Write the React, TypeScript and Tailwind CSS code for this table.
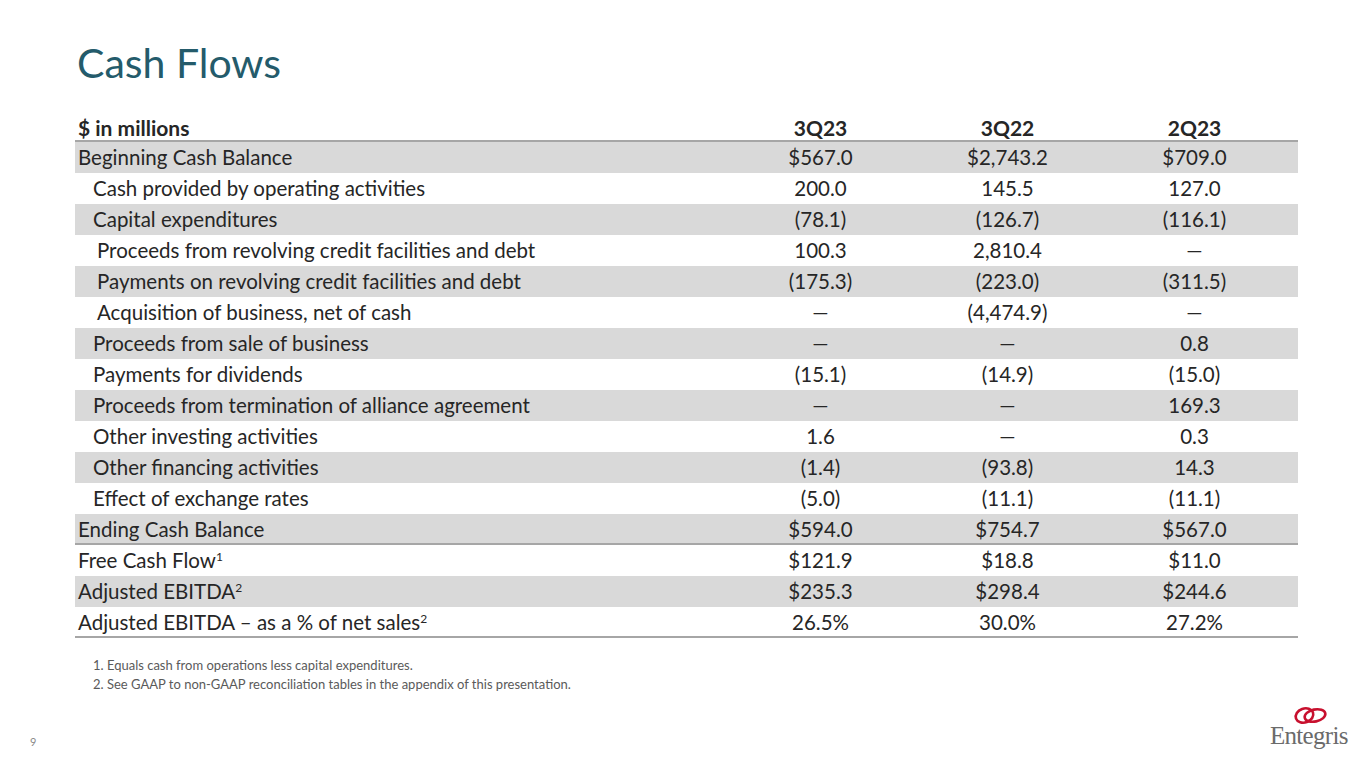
const rows: {
  label: string;
  sup?: string;
  indent?: number;
  shaded: boolean;
  values: string[];
  borderBottom?: boolean;
}[] = [
  { label: "Beginning Cash Balance", shaded: true, values: ["$567.0", "$2,743.2", "$709.0"] },
  { label: "Cash provided by operating activities", indent: 1, shaded: false, values: ["200.0", "145.5", "127.0"] },
  { label: "Capital expenditures", indent: 1, shaded: true, values: ["(78.1)", "(126.7)", "(116.1)"] },
  { label: "Proceeds from revolving credit facilities and debt", indent: 2, shaded: false, values: ["100.3", "2,810.4", "—"] },
  { label: "Payments on revolving credit facilities and debt", indent: 2, shaded: true, values: ["(175.3)", "(223.0)", "(311.5)"] },
  { label: "Acquisition of business, net of cash", indent: 2, shaded: false, values: ["—", "(4,474.9)", "—"] },
  { label: "Proceeds from sale of business", indent: 1, shaded: true, values: ["—", "—", "0.8"] },
  { label: "Payments for dividends", indent: 1, shaded: false, values: ["(15.1)", "(14.9)", "(15.0)"] },
  { label: "Proceeds from termination of alliance agreement", indent: 1, shaded: true, values: ["—", "—", "169.3"] },
  { label: "Other investing activities", indent: 1, shaded: false, values: ["1.6", "—", "0.3"] },
  { label: "Other financing activities", indent: 1, shaded: true, values: ["(1.4)", "(93.8)", "14.3"] },
  { label: "Effect of exchange rates", indent: 1, shaded: false, values: ["(5.0)", "(11.1)", "(11.1)"] },
  { label: "Ending Cash Balance", shaded: true, values: ["$594.0", "$754.7", "$567.0"], borderBottom: true },
  { label: "Free Cash Flow", sup: "1", shaded: false, values: ["$121.9", "$18.8", "$11.0"] },
  { label: "Adjusted EBITDA", sup: "2", shaded: true, values: ["$235.3", "$298.4", "$244.6"] },
  { label: "Adjusted EBITDA – as a % of net sales", sup: "2", shaded: false, values: ["26.5%", "30.0%", "27.2%"], borderBottom: true },
];

// entegris mark + wordmark, bottom right
const Logo = () => {
  return (
    <div className="flex flex-col items-center">
      <svg width="36" height="21" viewBox="0 0 36 21" className="ml-[4px]">
        <ellipse
          cx="11.5"
          cy="11.5"
          rx="9"
          ry="7"
          transform="rotate(-20 11.5 11.5)"
          fill="none"
          stroke="#c8102e"
          strokeWidth="2.6"
        />
        <ellipse
          cx="22"
          cy="11.5"
          rx="10.5"
          ry="6"
          transform="rotate(-12 22 11.5)"
          fill="none"
          stroke="#c8102e"
          strokeWidth="2.6"
        />
      </svg>
      <span className="font-['Liberation_Serif',serif] text-[25px] leading-[22px] tracking-[-0.7px] text-[#6b6b6b]">
        Entegris
      </span>
    </div>
  );
};

export default function App() {
  return (
    <div className="relative h-[768px] w-[1365px] overflow-hidden bg-white font-['Lato',sans-serif] text-[#262626]">
      <h1 className="ml-[77px] pt-[37px] text-[41px] leading-[52px] text-[#245b6b]">
        Cash Flows
      </h1>

      <div className="ml-[75px] mt-[23px] w-[1223px]">
        {/* header */}
        <div className="grid h-[30px] grid-cols-[1fr_187px_187px_187px] items-center border-b-2 border-[#a6a6a6] pr-[10px] text-[21px] font-bold">
          <span className="pl-[3px]">$ in millions</span>
          <span className="text-center">3Q23</span>
          <span className="text-center">3Q22</span>
          <span className="text-center">2Q23</span>
        </div>
        {rows.map((r) => {
          return (
            <div
              key={r.label}
              className={
                "grid h-[31px] grid-cols-[1fr_187px_187px_187px] items-center pr-[10px] text-[20.5px] " +
                (r.shaded ? "bg-[#d9d9d9] " : "bg-white ") +
                (r.borderBottom ? "border-b-2 border-[#a6a6a6]" : "")
              }
            >
              <span
                className={
                  r.indent === 2 ? "pl-[22px]" : r.indent === 1 ? "pl-[18px]" : "pl-[3px]"
                }
              >
                {r.label}
                {r.sup && (
                  <sup className="relative top-[-0.6em] align-baseline text-[12px]">{r.sup}</sup>
                )}
              </span>
              {r.values.map((v, i) => (
                <span key={i} className="text-center">
                  {v}
                </span>
              ))}
            </div>
          );
        })}
      </div>

      {/* footnotes */}
      <div className="ml-[93px] mt-[18px] text-[13px] leading-[19px] text-[#5a5a5a]">
        <p>1. Equals cash from operations less capital expenditures.</p>
        <p>2. See GAAP to non-GAAP reconciliation tables in the appendix of this presentation.</p>
      </div>

      <div className="absolute left-[30px] top-[734px] text-[11px] text-[#8a8a8a]">9</div>
      <div className="absolute left-[1270px] top-[704px]">
        <Logo />
      </div>
    </div>
  );
}
